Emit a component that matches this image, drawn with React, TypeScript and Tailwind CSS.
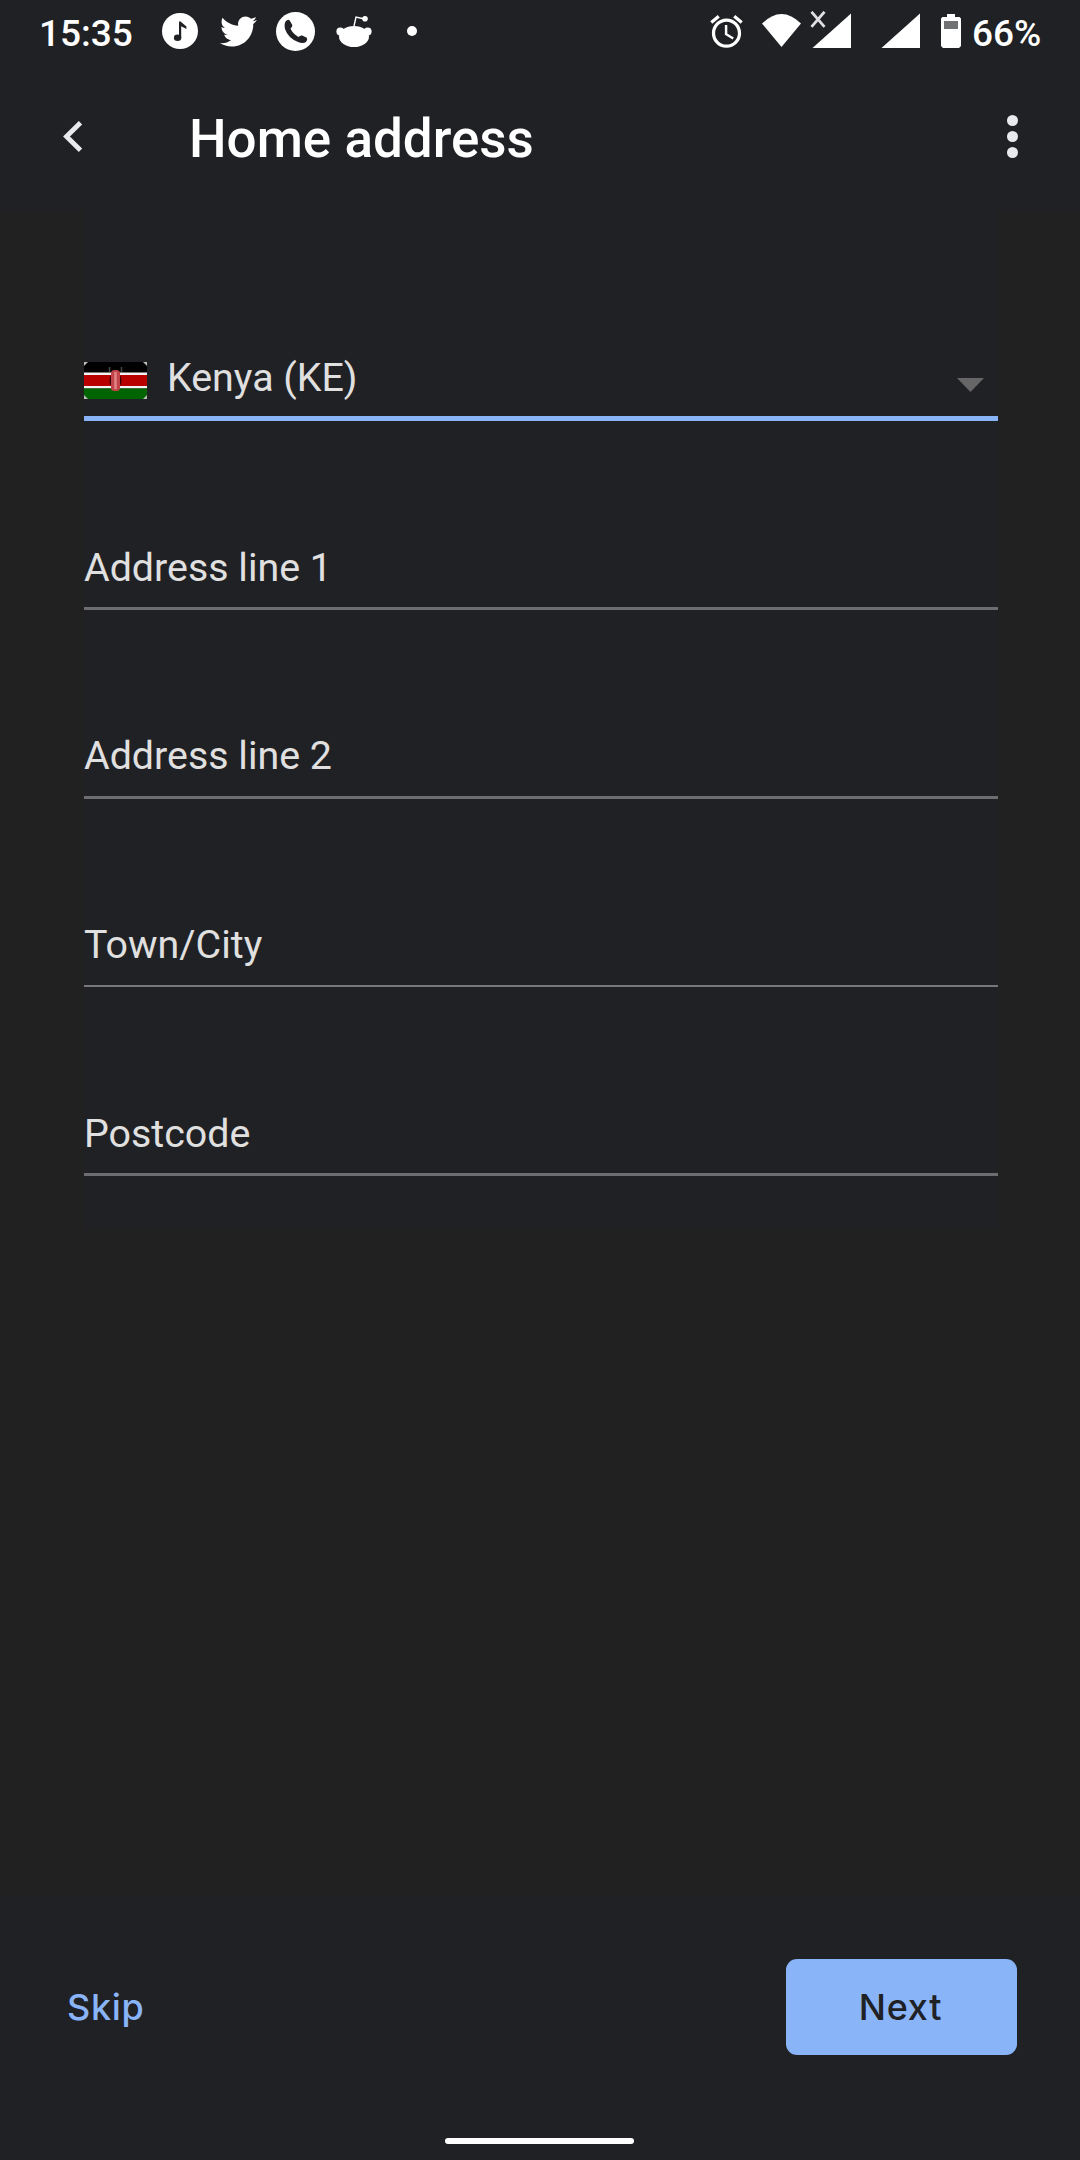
import { FaTwitter } from "react-icons/fa";
import { MdAlarm } from "react-icons/md";

function StatusBar() {
  return (
    <div className="flex h-16 w-full items-start text-[37px] font-medium text-white">
      <span className="ml-[39px] mt-3 w-[123px] leading-[44px]">15:35</span>
      <svg className="mt-[13px] size-9" viewBox="0 0 36 36">
        <circle cx="18" cy="18" r="18" fill="#fff" />
        <ellipse cx="15.600" cy="24.800" rx="3.700" ry="3.200" fill="#202124" />
        <path d="M17 8.500h1.600l5.800 5v2.400l-5.200-2.600v11.700H17Z" fill="#202124" />
      </svg>
      <FaTwitter className="ml-[22px] mt-[13px] size-[37px]" />
      <svg className="ml-[19px] mt-[12px] size-[39px]" viewBox="0 0 39 39">
        <circle cx="19.500" cy="19.500" r="19.500" fill="#fff" />
        <path
          d="M9.500 9.500Q12 6.800 13.700 8.500L16.300 13Q16.800 14.500 14.500 16.500 16.500 21.500 22.500 25 24.500 23 26.200 23.600L30.800 25.800Q32 27.500 30 30 27 32 22 30 12 26 9 17 8 12 9.500 9.500Z"
          fill="#202124"
        />
      </svg>
      <svg className="ml-[21px] mt-[14px] h-[34px] w-[36px]" viewBox="0 0 36 34" fill="currentColor">
        <ellipse cx="18" cy="22.500" rx="15" ry="10.500" />
        <circle cx="4.300" cy="17.500" r="3.900" />
        <circle cx="31.700" cy="17.500" r="3.900" />
        <path d="M18 12 20 3l7.500 1.800" fill="none" stroke="currentColor" strokeWidth="1.400" />
        <circle cx="29" cy="4.800" r="2.800" />
      </svg>
      <span className="ml-[35px] mt-[26px] size-[10px] rounded-full bg-white" />
      <MdAlarm className="ml-[290px] mt-[12px] size-[39px]" />
      <svg className="ml-[16px] mt-[14px] h-[33px] w-[39px]" viewBox="0 0 39 33" fill="currentColor">
        <path d="M0 9.500Q19.500-9.500 39 9.500L19.500 33Z" />
      </svg>
      <svg className="ml-[9px] mt-[11px] h-[37px] w-[43px]" viewBox="0 0 43 37" fill="currentColor">
        <path d="M41 2.500V37H2.500Z" />
        <path d="M1.500 .800 14.500 15.800M14.500 .800 1.500 15.800" stroke="#e0e0e2" strokeWidth="2.800" />
      </svg>
      <svg className="ml-[28px] mt-[13px] h-[35px] w-[39px]" viewBox="0 0 39 35" fill="currentColor">
        <path d="M39 .500V35H.500Z" />
      </svg>
      <svg className="ml-[21px] mt-[14px] h-[34px] w-[20px]" viewBox="0 0 20 34">
        <path d="M6 0h8v3h4.500l1.500 1.500V32l-2 2H2l-2-2V4.500L1.500 3H6Z" fill="#fff" />
        <path d="M3 7h14v8H3Z" fill="#707173" />
      </svg>
      <span className="ml-[11px] mt-3 leading-[44px]">66%</span>
    </div>
  );
}

function Header() {
  return (
    <header className="flex h-[146px] w-full items-start">
      <svg className="ml-[62px] mt-[57px] h-[31px] w-[21px]" viewBox="0 0 21 31">
        <path d="M18.500 1.800 4.500 15.500l14 13.700" fill="none" stroke="#e8eaed" strokeWidth="4.800" />
      </svg>
      <h1 className="ml-[106px] mt-[45px] flex-1 text-[53px] leading-[60px] font-medium text-white">
        Home address
      </h1>
      <div className="mr-[62px] mt-[51px] flex flex-col gap-[5px]">
        <span className="size-[11px] rounded-full bg-[#e8eaed]" />
        <span className="size-[11px] rounded-full bg-[#e8eaed]" />
        <span className="size-[11px] rounded-full bg-[#e8eaed]" />
      </div>
    </header>
  );
}

function KenyaFlag() {
  return (
    <svg className="h-[37px] w-[63px]" viewBox="0 0 63 37">
      <path d="M0 0h63v37H0Z" fill="#000" />
      <path d="M0 10.500h63v16H0Z" fill="#f2f2f2" />
      <path d="M0 13h63v11H0Z" fill="#b80000" />
      <path d="M0 26.500h63V37H0Z" fill="#006500" />
      <path d="M0 0h4L0 4ZM63 0h-4l4 4ZM0 37h4l-4-4ZM63 37h-4l4-4Z" fill="#b9bdb9" />
      <path d="M25.500 5v5M37.500 5v5" stroke="#444" strokeWidth="1.500" />
      <ellipse cx="31.500" cy="18.500" rx="6" ry="8" fill="#350000" />
      <rect x="27" y="8" width="9" height="21" rx="3.500" fill="#c2444a" />
      <path d="M31.500 10v17" stroke="#df8585" strokeWidth="2.500" />
    </svg>
  );
}

function Field({ label, rule }: { label: string; rule: string }) {
  return (
    <div className={"flex w-full flex-col justify-end " + rule}>
      <span className="leading-[46px]">{label}</span>
    </div>
  );
}

export default function App() {
  return (
    <div className="flex h-[2160px] w-[1080px] flex-col overflow-hidden bg-[#202124] font-[Roboto,sans-serif]">
      <StatusBar />
      <Header />
      <main className="h-[1685px] w-full bg-[#212121] pl-[84px]">
        <form className="flex h-[1019px] w-[914px] flex-col bg-[#202124] text-[39.375px] text-[#e0e0e0]">
          <div className="flex h-[211px] items-end border-b-[5px] border-[#8ab4f8]">
            <div className="mb-[17px] flex-none">
              <KenyaFlag />
            </div>
            <span className="mb-[15px] ml-5 flex-1 leading-[46px]">Kenya (KE)</span>
            <svg className="mb-[24px] mr-[14px] h-[14px] w-[27px]" viewBox="0 0 27 14">
              <path d="M0 0h27L13.500 14Z" fill="#666" />
            </svg>
          </div>
          <Field label="Address line 1" rule="h-[189px] border-b-[3px] border-[#6d6d70] pb-4" />
          <Field label="Address line 2" rule="h-[189px] border-b-[3px] border-[#6d6d70] pb-[17px]" />
          <Field label="Town/City" rule="h-[188px] border-b-2 border-[#77777b] pb-[17px]" />
          <Field label="Postcode" rule="h-[189px] border-b-[3px] border-[#6d6d70] pb-4" />
        </form>
      </main>
      <footer className="flex h-[265px] w-full flex-col">
        <div className="mt-[64px] flex h-24 items-center justify-between pl-[67px] pr-[63px] font-[Inter,sans-serif] text-[36px] font-medium tracking-[0.7px]">
          <button className="text-[#8ab4f8]">Skip</button>
          <button className="h-24 w-[231px] rounded-[11px] bg-[#8ab4f8] pr-[2px] text-[#202124]">Next</button>
        </div>
        <div className="ml-[445px] mt-[83px] h-[6px] w-[189px] rounded-full bg-white" />
      </footer>
    </div>
  );
}
